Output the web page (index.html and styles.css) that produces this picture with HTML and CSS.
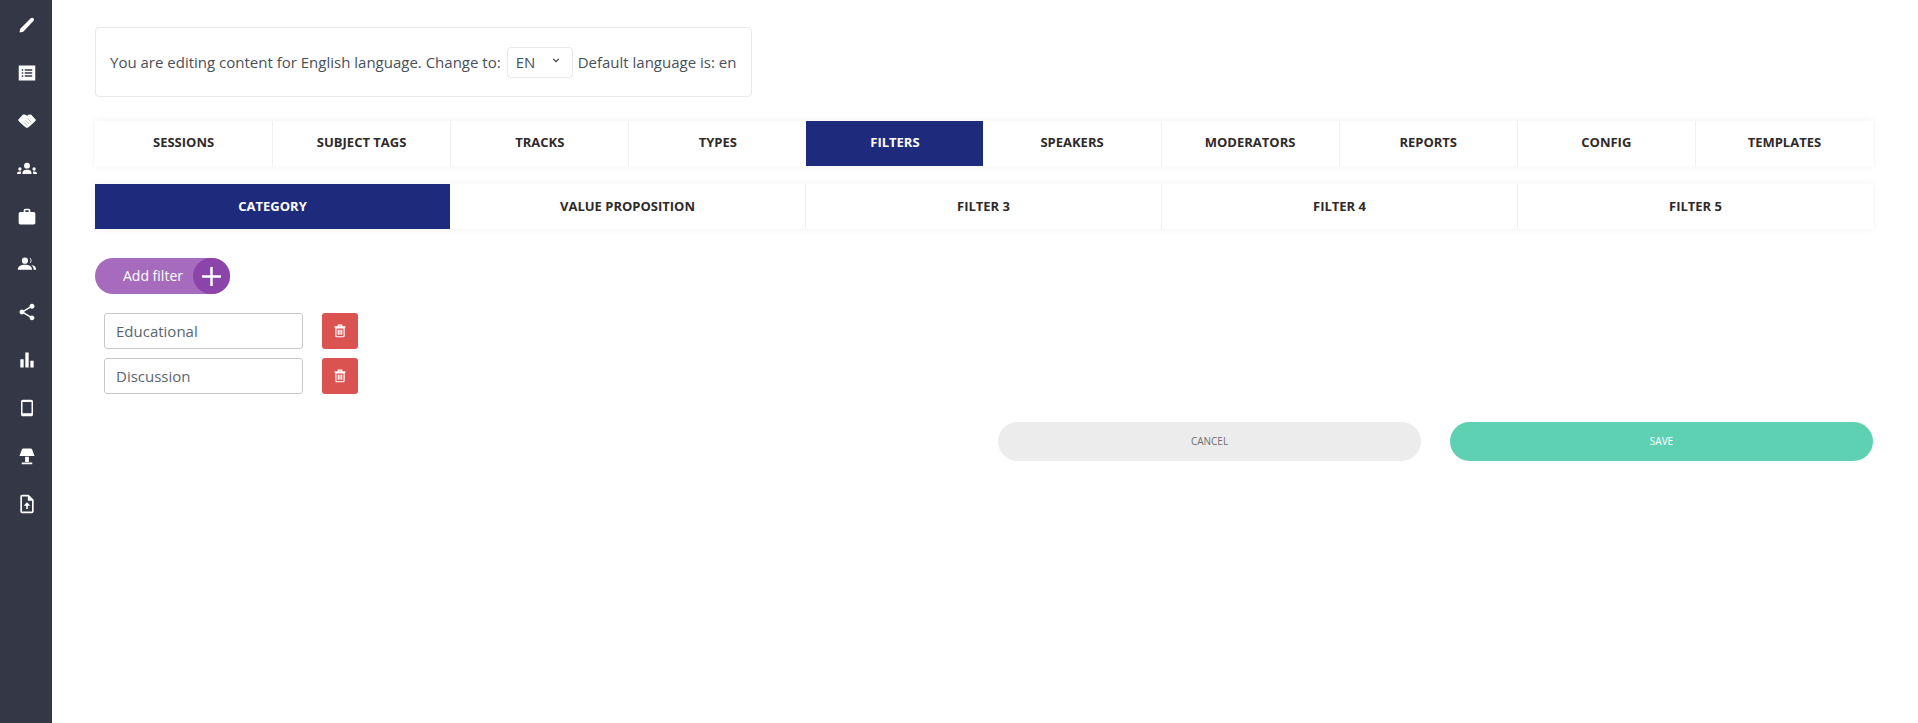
FILE: index.html
```html
<!DOCTYPE html>
<html lang="en">
<head>
<meta charset="UTF-8">
<title>Filters</title>
<link rel="stylesheet" href="styles.css">
</head>
<body>
<nav class="sidebar">
    <a class="side-item"><svg viewBox="0 0 24 24"><path d="M2 22l1-5L17 3c1-1 2.500-1 3.500 0s1 2.500 0 3.500L7 21z"/></svg></a>
    <a class="side-item"><svg viewBox="0 0 24 24"><path fill-rule="evenodd" d="M1 2h22v20H1zM5 7v2h2V7zm4 0v2h10V7zm-4 4v2h2v-2zm4 0v2h10v-2zm-4 4v2h2v-2zm4 0v2h10v-2z"/></svg></a>
    <a class="side-item"><svg viewBox="0 0 24 24"><path d="M0 10.500L6 4c2-1 4-.5 6 1 2-1.500 4-2 6-1l6 6.500c-2 3-6 6.500-10.500 10-1 .7-2 .7-3 0C6 17 2 13.500 0 10.500z"/><path d="M7 13l5 5M10 11l5 5M13 9l4 4" stroke="#343846" stroke-width=".8" stroke-opacity=".6" fill="none"/></svg></a>
    <a class="side-item big"><svg viewBox="0 0 24 24"><circle cx="12" cy="8" r="3.500"/><path d="M6.500 18c0-4 2-5 5.500-5s5.500 1 5.500 5z"/><circle cx="3.500" cy="12" r="2"/><path d="M0 18c0-2 1-3 3.500-3 .7 0 1.200.1 1.500.2-.3.800-.5 1.700-.5 2.800z"/><circle cx="20.500" cy="12" r="2"/><path d="M24 18c0-2-1-3-3.500-3-.7 0-1.200.1-1.500.2.300.800.5 1.700.5 2.800z"/></svg></a>
    <a class="side-item big"><svg viewBox="0 0 24 24"><path d="M20 6h-4V4c0-1.110-.890-2-2-2h-4c-1.110 0-2 .890-2 2v2H4c-1.110 0-1.990.890-1.990 2L2 19c0 1.110.890 2 2 2h16c1.110 0 2-.890 2-2V8c0-1.110-.890-2-2-2zm-6 0h-4V4h4v2z"/></svg></a>
    <a class="side-item big"><svg viewBox="0 0 24 24"><circle cx="9.500" cy="8" r="3.700"/><path d="M1 19c0-4 3-6 8.500-6s8.500 2 8.500 6z"/><path d="M15 4.500a3.700 3.700 0 010 7 5.500 5.500 0 000-7zM17 13.200c3.500.3 6 2 6 5.800h-3c0-2.500-1-4.500-3-5.800z"/></svg></a>
    <a class="side-item big"><svg viewBox="0 0 24 24"><path d="M18 16.080c-.760 0-1.440.300-1.960.770L8.910 12.700c.050-.230.090-.460.090-.700s-.040-.470-.090-.700l7.050-4.110c.540.500 1.250.810 2.040.810 1.660 0 3-1.340 3-3s-1.340-3-3-3-3 1.340-3 3c0 .240.040.470.090.700L8.040 9.810C7.500 9.310 6.790 9 6 9c-1.660 0-3 1.340-3 3s1.340 3 3 3c.790 0 1.500-.310 2.040-.810l7.120 4.160c-.050.210-.080.430-.080.650 0 1.610 1.310 2.920 2.920 2.920s2.920-1.310 2.920-2.920-1.310-2.920-2.920-2.920z"/></svg></a>
    <a class="side-item big"><svg viewBox="0 0 24 24"><path d="M4 11h4v10H4zM10 3h4v18h-4zM16 13h4v8h-4z"/></svg></a>
    <a class="side-item"><svg viewBox="0 0 24 24"><path fill-rule="evenodd" d="M6.500 1h11C19 1 20 2 20 3.500v17c0 1.500-1 2.500-2.500 2.500h-11C5 23 4 22 4 20.500v-17C4 2 5 1 6.500 1zM6 4v15h12V4z"/></svg></a>
    <a class="side-item"><svg viewBox="0 0 24 24"><path d="M7 2h10c1 0 1.500.5 2 1.500l3 8.500H2l3-8.500C5.500 2.500 6 2 7 2zM9.500 13h5v7h-5zM5 20.500h14V23H5z"/></svg></a>
    <a class="side-item big"><svg viewBox="0 0 24 24"><path fill-rule="evenodd" d="M6 1h8l6 6v14c0 1-1 2-2 2H6c-1 0-2-1-2-2V3c0-1 1-2 2-2zm0 2v18h12V8h-5V3zm6 7l4 4h-3v4h-2v-4H8z"/></svg></a>
</nav>

<main class="content">
    <div class="lang-box">
        <span>You are editing content for English language. Change to:</span>
        <span class="lang-select">EN<svg viewBox="0 0 10 6"><path d="M1.500 1L5 4.500 8.500 1" fill="none" stroke="#343a40" stroke-width="1.500"/></svg></span>
        <span>Default language is: en</span>
    </div>

    <div class="tabs">
        <a class="tab">Sessions</a>
        <a class="tab">Subject tags</a>
        <a class="tab">Tracks</a>
        <a class="tab">Types</a>
        <a class="tab active">Filters</a>
        <a class="tab">Speakers</a>
        <a class="tab">Moderators</a>
        <a class="tab">Reports</a>
        <a class="tab">Config</a>
        <a class="tab">Templates</a>
    </div>

    <div class="tabs sub-tabs">
        <a class="tab active">Category</a>
        <a class="tab">Value proposition</a>
        <a class="tab">Filter 3</a>
        <a class="tab">Filter 4</a>
        <a class="tab">Filter 5</a>
    </div>

    <button class="add-btn">
        <span class="add-label">Add filter</span>
        <span class="add-plus"><svg viewBox="0 0 20 20"><path d="M10 0v20M0 10h20" stroke="#fff" stroke-width="2.600"/></svg></span>
    </button>

    <div class="filter-list">
        <div class="filter-row">
            <input class="filter-input" value="Educational">
            <button class="del-btn"><svg viewBox="0 0 14 16"><path fill="none" stroke="#fff" stroke-width="1.400" d="M2.200 4.500h9.600v9c0 .8-.4 1.200-1.200 1.200H3.400c-.8 0-1.200-.4-1.200-1.200zM.5 3.200h13M5 3V1.200h4V3M5 6.500v6M7 6.500v6M9 6.500v6"/></svg></button>
        </div>
        <div class="filter-row">
            <input class="filter-input" value="Discussion">
            <button class="del-btn"><svg viewBox="0 0 14 16"><path fill="none" stroke="#fff" stroke-width="1.400" d="M2.200 4.500h9.600v9c0 .8-.4 1.200-1.200 1.200H3.400c-.8 0-1.200-.4-1.200-1.200zM.5 3.200h13M5 3V1.200h4V3M5 6.500v6M7 6.500v6M9 6.500v6"/></svg></button>
        </div>
    </div>

    <div class="actions">
        <button class="action cancel">CANCEL</button>
        <button class="action save">SAVE</button>
    </div>
</main>
</body>
</html>
```

FILE: styles.css
```css
* {
    box-sizing: border-box;
}

html, body {
    height: 100%;
}

body {
    display: flex;
    margin: 0;
    background-color: #fff;
    color: #495057;
    font-family: "Open Sans", sans-serif;
    font-size: 15px;
}

.sidebar {
    flex: 0 0 52px;
    padding: 1px 0 0 2px;
    background-color: #343846;
}

.side-item {
    display: flex;
    justify-content: center;
    align-items: center;
    height: 47.9px;
}

.side-item svg {
    width: 18px;
    height: 18px;
    fill: #fff;
}

.side-item.big svg {
    width: 20px;
    height: 20px;
}

.content {
    flex: 1;
    padding: 27px 45px 0 43px;
}

.lang-box {
    display: flex;
    align-items: center;
    gap: 5px;
    width: 657px;
    height: 70px;
    padding: 0 14px;
    border: 1px solid #e9e9e9;
    border-radius: 4px;
}

.lang-select {
    display: flex;
    justify-content: space-between;
    align-items: center;
    width: 66px;
    height: 31px;
    margin-left: 1px;
    padding: 0 12px 0 8px;
    border: 1px solid #e9e9e9;
    border-radius: 4px;
}

.lang-select svg {
    width: 8px;
    height: 5px;
    margin-bottom: 3px;
}

.tabs {
    display: flex;
    height: 45px;
    margin-top: 24px;
    box-shadow: 0 0 8px rgba(0,0,0,0.06);
}

.sub-tabs {
    margin-top: 18px;
}

.tab {
    display: flex;
    flex: 1;
    justify-content: center;
    align-items: center;
    padding-bottom: 3px;
    border-left: 1px solid #f0f0f0;
    color: #2f2a2a;
    font-size: 13px;
    font-weight: 700;
    text-transform: uppercase;
}

.sub-tabs .tab {
    padding-bottom: 1px;
}

.tab:first-child {
    border-left: none;
}

.tab.active {
    background-color: #1e2a7c;
    border-left: none;
    color: #fff;
}

.tab.active + .tab {
    border-left: none;
}

.add-btn {
    display: flex;
    align-items: center;
    justify-content: space-between;
    width: 135px;
    height: 36px;
    margin-top: 29px;
    padding: 0 0 0 28px;
    background-color: #a66bbd;
    border: none;
    border-radius: 18px;
    color: #fff;
    font-family: inherit;
    font-size: 14px;
}

.add-label {
    margin-bottom: 2px;
}

.add-plus {
    display: flex;
    justify-content: center;
    align-items: center;
    width: 37px;
    height: 36px;
    background-color: #8b45a8;
    border-radius: 50%;
}

.add-plus svg {
    width: 19px;
    height: 19px;
}

.filter-list {
    display: flex;
    flex-direction: column;
    gap: 9px;
    margin-top: 19px;
    padding-left: 9px;
}

.filter-row {
    display: flex;
    gap: 19px;
}

.filter-input {
    width: 199px;
    height: 36px;
    padding: 0 11px;
    border: 1px solid #c8c8c8;
    border-radius: 3px;
    color: #5a6570;
    font-family: inherit;
    font-size: 15px;
}

.del-btn {
    display: flex;
    justify-content: center;
    align-items: center;
    width: 36px;
    height: 36px;
    padding: 0;
    background-color: #db5350;
    border: none;
    border-radius: 3px;
}

.del-btn svg {
    width: 12px;
    height: 14px;
}

.actions {
    display: flex;
    justify-content: flex-end;
    gap: 29px;
    margin-top: 28px;
}

.action {
    width: 423px;
    height: 39px;
    padding-bottom: 3px;
    border: none;
    border-radius: 20px;
    font-family: inherit;
    font-size: 10px;
}

.cancel {
    background-color: #ececec;
    color: #6d6d6d;
}

.save {
    background-color: #5fd1b3;
    color: #fff;
}
```
